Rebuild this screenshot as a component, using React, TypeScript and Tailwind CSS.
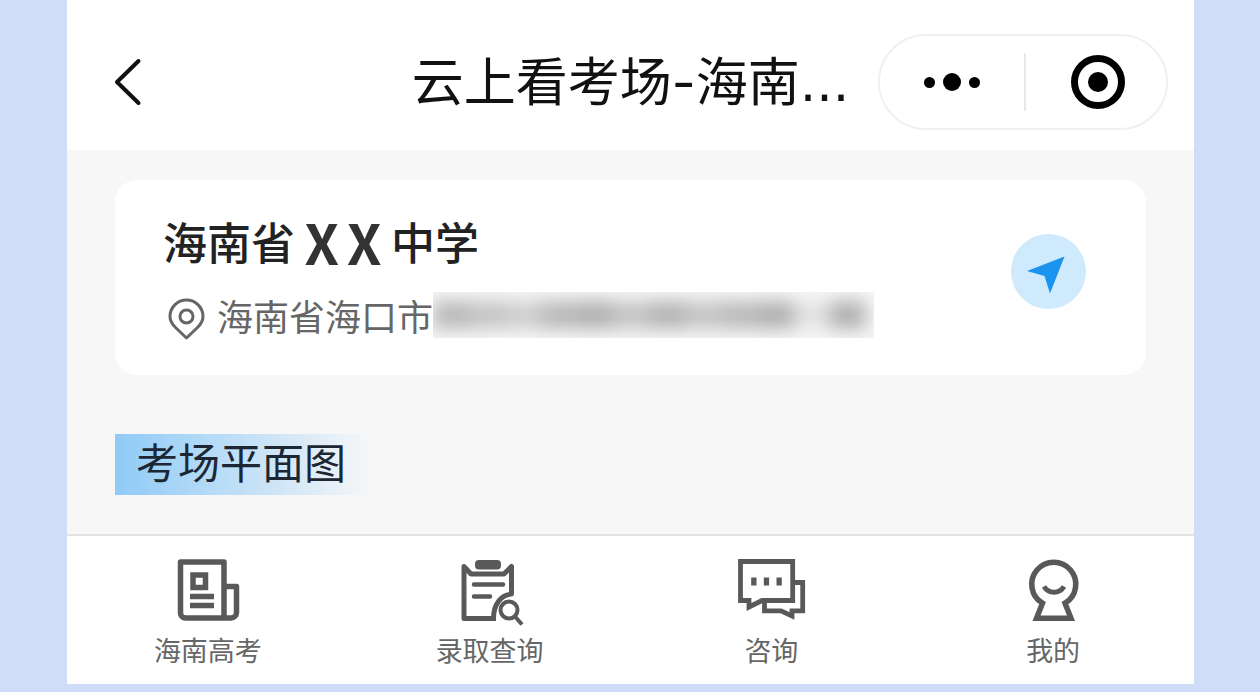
import type { ReactNode } from "react";

const cjk = "font-['Noto_Sans_CJK_SC',sans-serif]";

function Header() {
  return (
    <header className="grid grid-cols-[1fr_auto_1fr] items-center bg-white pt-[34px] pb-5">
      <button type="button" aria-label="返回" className="ml-11 flex h-14 w-9 items-center justify-center">
        <svg width="36" height="56" viewBox="0 0 36 56" fill="none" stroke="#111" strokeWidth="4" strokeLinecap="round" strokeLinejoin="round">
          <path d="M27.5 7 6 28 27.5 49" />
        </svg>
      </button>
      <h1 className="pt-[2px] font-['Inter','Noto_Sans_CJK_SC',sans-serif] text-[52px] leading-[72px] whitespace-nowrap text-[#111]">
        云上看考场-海南<span className="font-['DejaVu_Sans',sans-serif]">...</span>
      </h1>
      <div className="mr-[26px] flex h-24 w-[290px] items-center justify-self-end rounded-full border-2 border-[#f0f0f0] bg-white">
        <button type="button" aria-label="更多" className="flex h-full w-36 items-center justify-center gap-2">
          <span className="size-[11px] rounded-full bg-black" />
          <span className="size-[18px] rounded-full bg-black" />
          <span className="size-[11px] rounded-full bg-black" />
        </button>
        <span className="h-[58px] w-[2px] bg-[#e8e8e8]" />
        <button type="button" aria-label="关闭" className="flex h-full flex-1 items-center justify-center pl-1">
          <span className="flex size-[54px] items-center justify-center rounded-full border-[7px] border-black">
            <span className="size-5 rounded-full bg-black" />
          </span>
        </button>
      </div>
    </header>
  );
}

function HiddenAddress() {
  return (
    <span aria-hidden="true" className="flex h-[46px] w-[441px] items-center overflow-hidden bg-[#f7f7f7]">
      <span className="flex h-8 w-full items-center pr-2 blur-[9px]">
        <span className="h-7 flex-1 bg-[#b8b8b8]" />
        <span className="h-7 flex-1 bg-[#c4c4c4]" />
        <span className="h-7 flex-1 bg-[#cecece]" />
        <span className="h-7 flex-1 bg-[#b8b8b8]" />
        <span className="h-7 flex-1 bg-[#b0b0b0]" />
        <span className="h-7 flex-1 bg-[#c4c4c4]" />
        <span className="h-7 flex-1 bg-[#b4b4b4]" />
        <span className="h-7 flex-1 bg-[#c4c4c4]" />
        <span className="h-7 flex-1 bg-[#bababa]" />
        <span className="h-7 flex-1 bg-[#b0b0b0]" />
        <span className="h-6 flex-1 bg-[#e0e0e0]" />
        <span className="h-7 flex-1 bg-[#b0b0b0]" />
      </span>
    </span>
  );
}

function SchoolCard() {
  return (
    <section className="flex items-center justify-between rounded-[22px] bg-white pt-[29px] pr-[60px] pb-[37px] pl-12">
      <div>
        <h2 className="flex h-16 items-center text-[44px] leading-[64px] font-medium text-[#222]">
          <span>海南省</span>
          <span className="flex w-24 justify-center gap-2 text-[55px] font-bold text-[#333]">
            <span>X</span>
            <span>X</span>
          </span>
          <span>中学</span>
        </h2>
        <p className="mt-[19px] flex h-[46px] items-center text-[36px] leading-[46px] text-[#666]">
          <svg className="mr-2 shrink-0" width="46" height="50" viewBox="0 -2 46 50" fill="none" stroke="#666" strokeWidth="3">
            <path strokeLinejoin="round" d="M23.500 46 12.500 35.500C8.500 31.500 7 28 7 24.500a16.500 16.500 0 0 1 33 0c0 3.500-1.500 7-5.500 11Z" />
            <circle cx="23.500" cy="24.500" r="6.500" />
          </svg>
          <span>海南省海口市</span>
          <HiddenAddress />
        </p>
      </div>
      <button type="button" aria-label="导航" className="mb-1 size-[75px] rounded-full bg-[#cfe9fd]">
        <svg width="75" height="75" viewBox="0 0 75 75" fill="#1a94ee">
          <path d="M16 37 53.500 22.500 39 59.500 33.500 42Z" />
        </svg>
      </button>
    </section>
  );
}

function NewsIcon() {
  return (
    <g strokeWidth="5.500">
      <path strokeLinejoin="round" d="M52 60V4H8.500v51a5 5 0 0 0 5 5H59a5.500 5.500 0 0 0 5.500-5.500V28.500H52" />
      <path d="M21 17h12.500v12.500H21ZM18 38.500h24M18 47.500h24" />
    </g>
  );
}

function QueryIcon() {
  return (
    <g strokeWidth="5">
      <path strokeLinejoin="round" d="M42 60.500H10V8.500l7 7.500h33l7.500-7.500V36C47 37 39.500 46 39.500 60.500" />
      <rect x="21" y="2" width="26" height="9.500" rx="4" fill="#595959" stroke="none" />
      <path strokeWidth="4.500" strokeLinecap="round" d="M20 26.500h29M20 38.500h16" />
      <circle cx="55" cy="52" r="8.500" strokeWidth="4" />
      <path strokeWidth="4" d="m61 58.500 7 8" />
    </g>
  );
}

function ChatIcon() {
  return (
    <g strokeWidth="4.800">
      <path d="M5.500 3.500h52.200v39H27L14 49v-6.500H5.500Z" />
      <path d="M59 24.500h8.700v28.300H57V58l-11-5.200H29.500V44" />
      <path strokeWidth="8" d="M16.200 23.500h5.300M28.800 23.500h5.300M41.500 23.500h5.300" />
    </g>
  );
}

function MineIcon() {
  return (
    <g strokeWidth="5.500">
      <path d="M25.500 45.200A22 22 0 1 1 48 45.200L54 60.300H19.500Z" />
      <path strokeWidth="5" d="M27 28.500c4.500 7.500 15.500 7.500 20 0" />
    </g>
  );
}

const tabs: { label: string; icon: ReactNode }[] = [
  { label: "海南高考", icon: <NewsIcon /> },
  { label: "录取查询", icon: <QueryIcon /> },
  { label: "咨询", icon: <ChatIcon /> },
  { label: "我的", icon: <MineIcon /> },
];

function TabBar() {
  return (
    <nav className="grid grid-cols-4 border-t-2 border-[#e2e2e2] bg-white pt-[22px] pb-[14px]">
      {tabs.map((tab) => (
        <a key={tab.label} href="#" className="flex flex-col items-center text-[27px] leading-[40px] text-[#666]">
          <svg width="72" height="72" viewBox="0 0 72 72" fill="none" stroke="#595959" aria-hidden="true">
            {tab.icon}
          </svg>
          {tab.label}
        </a>
      ))}
    </nav>
  );
}

export default function App() {
  return (
    <div className={`flex min-h-screen flex-col bg-[#d0ddf8] pr-[66px] pb-2 pl-[67px] ${cjk}`}>
      <Header />
      <main className="flex-1 bg-[#f7f7f7] px-12 pt-[30px]">
        <SchoolCard />
        <h2 className="mt-[59px] w-64 bg-linear-to-r from-[#8fcbf6] via-[#cbe4f7] via-60% to-[#f7f7f7] pb-2 pl-[21px] text-[42px] leading-[53px] text-[#1c2733]">
          考场平面图
        </h2>
      </main>
      <TabBar />
    </div>
  );
}
